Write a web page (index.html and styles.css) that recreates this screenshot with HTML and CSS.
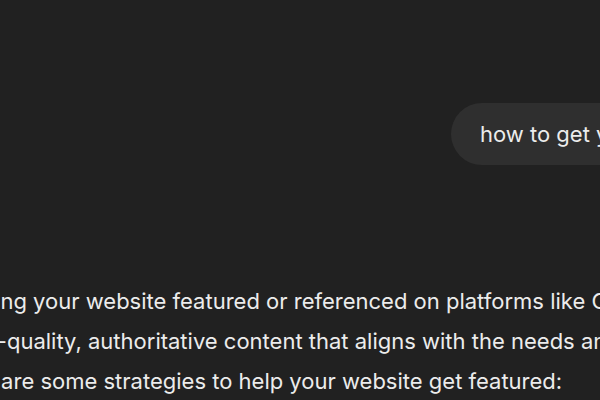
FILE: index.html
```html
<!DOCTYPE html>
<html>
<head>
<meta charset="utf-8">
<link rel="stylesheet" href="styles.css">
</head>
<body>
<div class="page">
  <div class="thread">
    <div class="user-row">
      <div class="bubble">how to get your website featured on chatgpt</div>
    </div>
    <div class="answer">
      <div class="line">Getting your website featured or referenced on platforms like ChatGPT involves creating</div>
      <div class="line">high-quality, authoritative content that aligns with the needs and interests of users.</div>
      <div class="line line-last">Here are some strategies to help your website get featured:</div>
    </div>
  </div>
</div>
</body>
</html>
```
FILE: styles.css
```css
html, body {
  margin: 0;
  padding: 0;
  background: #212121;
}
.page {
  width: 600px;
  height: 400px;
  overflow: hidden;
  font-family: Inter, "Noto Sans", sans-serif;
  font-size: 22px;
  color: #ececec;
}
.thread {
  width: 1200px;
  margin-left: -48px;
  padding-top: 103px;
}
.user-row {
  display: flex;
  padding-left: 499px;
}
.bubble {
  background: #2f2f2f;
  border-radius: 31px;
  height: 62px;
  line-height: 62px;
  padding: 0 29px;
  white-space: nowrap;
}
.answer {
  margin-top: 116px;
}
.line {
  line-height: 40px;
  white-space: nowrap;
}
.line-last {
  margin-left: -7px;
}
```
